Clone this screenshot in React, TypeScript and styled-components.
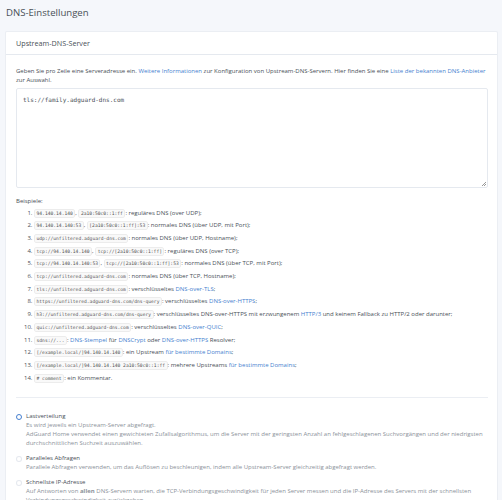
import React from "react";
import styled, { createGlobalStyle } from "styled-components";

const Global = createGlobalStyle`
  html, body { margin: 0; padding: 0; overflow: hidden; }
  body {
    background: #f5f7fb;
    font-family: "Open Sans", "Noto Sans", sans-serif;
    color: #495057;
    -webkit-font-smoothing: antialiased;
  }
`;

const Page = styled.div`
  padding: 5px 4px 0 5px;
  width: 493px;
`;

const Title = styled.h1`
  margin: 0 0 0 1px;
  font-size: 9.6px;
  line-height: 16px;
  font-weight: 400;
  color: #495057;
  padding-bottom: 10px;
`;

const Card = styled.section`
  background: #fff;
  border: 1px solid rgba(0, 40, 100, 0.08);
  border-radius: 2px;
`;

const CardHeader = styled.div`
  height: 22px;
  display: flex;
  align-items: center;
  padding: 0 10px;
  font-size: 7.2px;
  color: #495057;
  border-bottom: 1px solid rgba(0, 40, 100, 0.1);
`;

const CardBody = styled.div`
  padding: 11.5px 9px 0 10px;
`;

const Text = styled.p`
  margin: 0;
  font-size: 6px;
  line-height: 9px;
`;

const Link = styled.a`
  color: #467fcf;
  text-decoration: none;
`;

const Area = styled.div`
  margin-top: 3px;
  height: 100px;
  box-sizing: border-box;
  border: 1px solid rgba(0, 40, 100, 0.1);
  border-radius: 2px;
  padding: 7px 6px;
  font-family: "DejaVu Sans Mono", monospace;
  font-size: 6px;
  color: #495057;
  position: relative;
`;

const Grip = styled.span`
  position: absolute;
  right: 1px;
  bottom: 1px;
  width: 4px;
  height: 4px;
  background: linear-gradient(135deg, transparent 45%, #999 45%, #999 55%, transparent 55%, transparent 75%, #999 75%, #999 85%, transparent 85%);
`;

const ExLabel = styled(Text)`
  margin-top: 9px;
`;

const List = styled.ol`
  margin: 1px 0 0;
  padding-left: 18px;
  font-size: 6px;
  line-height: 12.7px;
`;

const Code = styled.code`
  font-family: "DejaVu Sans Mono", monospace;
  font-size: 4.65px;
  line-height: 1;
  padding: 1px 1.5px;
  background: rgba(0, 0, 0, 0.025);
  border: 1px solid rgba(0, 0, 0, 0.05);
  border-radius: 2px;
  color: #555;
`;

const Rule = styled.hr`
  border: 0;
  border-top: 1px solid rgba(0, 40, 100, 0.08);
  margin: 13px 0 0;
`;

const Options = styled.div`
  padding-top: 14px;
  display: flex;
  flex-direction: column;
  gap: 6px;
`;

const Option = styled.label`
  display: grid;
  grid-template-columns: 6px 1fr;
  column-gap: 4px;
  font-size: 6px;
  line-height: 9px;
`;

const Dot = styled.span<{ $on?: boolean }>`
  width: 6px;
  height: 6px;
  margin-top: 1.5px;
  box-sizing: border-box;
  border-radius: 50%;
  border: ${(p) => (p.$on ? "1.6px solid #467fcf" : "1px solid rgba(0,40,100,0.1)")};
  background: #fff;
`;

const OptTitle = styled.div`
  color: #495057;
`;

const OptDesc = styled.div`
  color: #8b929a;
`;

const examples: React.ReactNode[] = [
  <><Code>94.140.14.140</Code>, <Code>2a10:50c0::1:ff</Code>: reguläres DNS (over UDP);</>,
  <><Code>94.140.14.140:53</Code>, <Code>[2a10:50c0::1:ff]:53</Code>: normales DNS (über UDP, mit Port);</>,
  <><Code>udp://unfiltered.adguard-dns.com</Code>: normales DNS (über UDP, Hostname);</>,
  <><Code>tcp://94.140.14.140</Code>, <Code>tcp://[2a10:50c0::1:ff]</Code>: reguläres DNS (over TCP);</>,
  <><Code>tcp://94.140.14.140:53</Code>, <Code>tcp://[2a10:50c0::1:ff]:53</Code>: normales DNS (über TCP, mit Port);</>,
  <><Code>tcp://unfiltered.adguard-dns.com</Code>: normales DNS (über TCP, Hostname);</>,
  <><Code>tls://unfiltered.adguard-dns.com</Code>: verschlüsseltes <Link>DNS-over-TLS</Link>;</>,
  <><Code>https://unfiltered.adguard-dns.com/dns-query</Code>: verschlüsseltes <Link>DNS-over-HTTPS</Link>;</>,
  <><Code>h3://unfiltered.adguard-dns.com/dns-query</Code>: verschlüsseltes DNS-over-HTTPS mit erzwungenem <Link>HTTP/3</Link> und keinem Fallback zu HTTP/2 oder darunter;</>,
  <><Code>quic://unfiltered.adguard-dns.com</Code>: verschlüsseltes <Link>DNS-over-QUIC</Link>;</>,
  <><Code>sdns://...</Code>: <Link>DNS-Stempel</Link> für <Link>DNSCrypt</Link> oder <Link>DNS-over-HTTPS</Link> Resolver;</>,
  <><Code>[/example.local/]94.140.14.140</Code>: ein Upstream <Link>für bestimmte Domains</Link>;</>,
  <><Code>[/example.local/]94.140.14.140 2a10:50c0::1:ff</Code>: mehrere Upstreams <Link>für bestimmte Domains</Link>;</>,
  <><Code># comment</Code>: ein Kommentar.</>,
];

export default function App() {
  return (
    <>
      <Global />
      <Page>
        <Title>DNS-Einstellungen</Title>
        <Card>
          <CardHeader>Upstream-DNS-Server</CardHeader>
          <CardBody>
            <Text>
              Geben Sie pro Zeile eine Serveradresse ein. <Link>Weitere Informationen</Link> zur Konfiguration von
              Upstream-DNS-Servern. Hier finden Sie eine <Link>Liste der bekannten DNS-Anbieter</Link> zur Auswahl.
            </Text>
            <Area>
              tls://family.adguard-dns.com
              <Grip />
            </Area>
            <ExLabel>Beispiele:</ExLabel>
            <List>
              {examples.map((e, i) => (
                <li key={i}>{e}</li>
              ))}
            </List>
            <Rule />
            <Options>
              <Option>
                <Dot $on />
                <div>
                  <OptTitle>Lastverteilung</OptTitle>
                  <OptDesc>
                    Es wird jeweils ein Upstream-Server abgefragt.
                    <br />
                    AdGuard Home verwendet einen gewichteten Zufallsalgorithmus, um die Server mit der geringsten Anzahl an
                    fehlgeschlagenen Suchvorgängen und der niedrigsten durchschnittlichen Suchzeit auszuwählen.
                  </OptDesc>
                </div>
              </Option>
              <Option>
                <Dot />
                <div>
                  <OptTitle>Paralleles Abfragen</OptTitle>
                  <OptDesc>
                    Parallele Abfragen verwenden, um das Auflösen zu beschleunigen, indem alle Upstream-Server gleichzeitig
                    abgefragt werden.
                  </OptDesc>
                </div>
              </Option>
              <Option>
                <Dot />
                <div>
                  <OptTitle>Schnellste IP-Adresse</OptTitle>
                  <OptDesc>
                    Auf Antworten von <b>allen</b> DNS-Servern warten, die TCP-Verbindungsgeschwindigkeit für jeden Server
                    messen und die IP-Adresse des Servers mit der schnellsten Verbindungsgeschwindigkeit zurückgeben.
                  </OptDesc>
                </div>
              </Option>
            </Options>
          </CardBody>
        </Card>
      </Page>
    </>
  );
}
